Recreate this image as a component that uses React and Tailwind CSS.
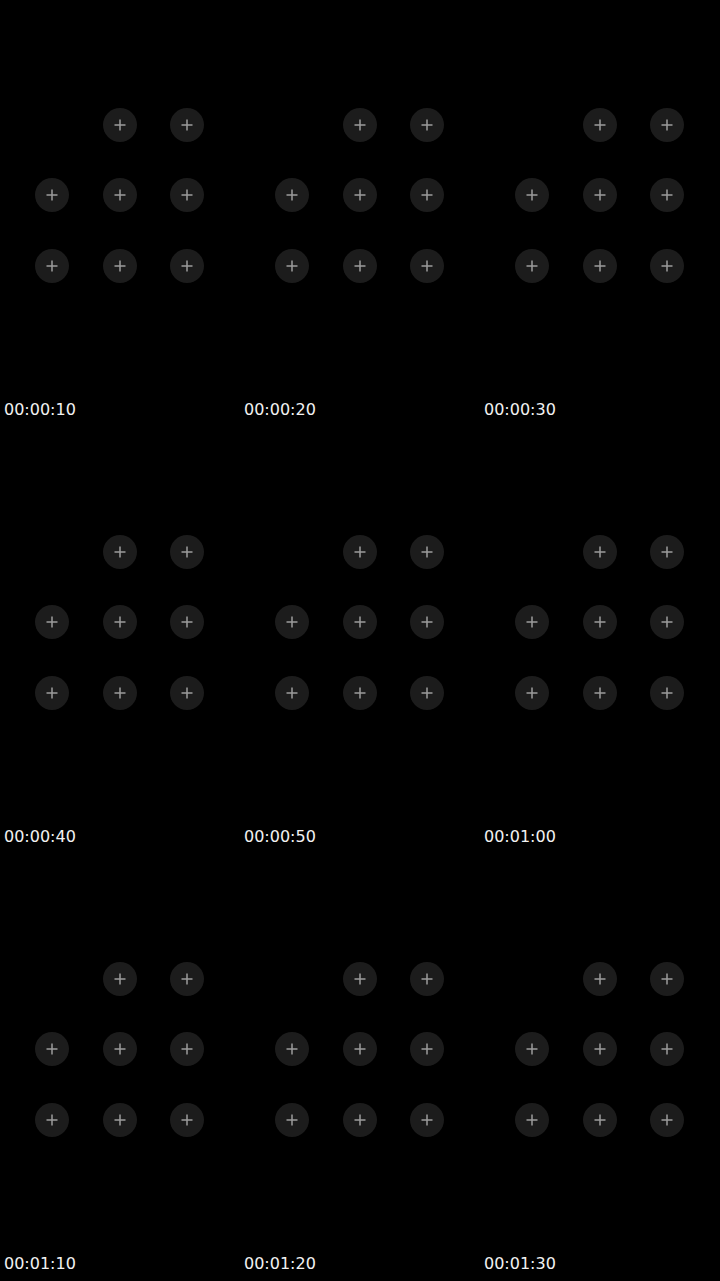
import React from "react";

const times = [
  "00:00:10",
  "00:00:20",
  "00:00:30",
  "00:00:40",
  "00:00:50",
  "00:01:00",
  "00:01:10",
  "00:01:20",
  "00:01:30",
];

function PlusButton({ hidden }) {
  if (hidden) return <div className="w-[34px] h-[34px]" />;
  return (
    <button className="w-[34px] h-[34px] rounded-full bg-[#1c1c1c] flex items-center justify-center">
      <svg width="12" height="12" viewBox="0 0 12 12">
        <path d="M6 0.5v11M0.5 6h11" stroke="#9c9c9c" strokeWidth="1.5" />
      </svg>
    </button>
  );
}

function Cell({ time }) {
  return (
    <div className="h-[427px] flex flex-col">
      <div className="pt-[107.5px] pl-[35px] grid grid-cols-[34px_34px_34px] gap-x-[33.5px] gap-y-[36.5px]">
        {Array.from({ length: 9 }).map((_, i) => (
          <PlusButton key={i} hidden={i === 0} />
        ))}
      </div>
      <p className="mt-[115.5px] pl-[4px] text-[16px] leading-6 text-[#f2f2f2]">{time}</p>
    </div>
  );
}

export default function App() {
  return (
    <div
      className="w-[720px] h-[1281px] bg-black grid grid-cols-3 overflow-hidden"
      style={{ fontFamily: '"DejaVu Sans", sans-serif' }}
    >
      {times.map((t) => (
        <Cell key={t} time={t} />
      ))}
    </div>
  );
}
